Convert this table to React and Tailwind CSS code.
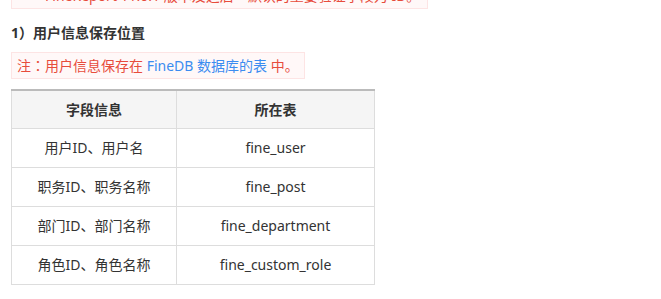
export default function App() {
  const rows = [
    ["用户ID、用户名", "fine_user"],
    ["职务ID、职务名称", "fine_post"],
    ["部门ID、部门名称", "fine_department"],
    ["角色ID、角色名称", "fine_custom_role"],
  ];
  const tc = { fontFamily: '"Noto Sans CJK TC", sans-serif' };
  return (
    <div
      className="w-[661px] h-[299px] overflow-hidden bg-white text-[14px] text-[#333]"
      style={{ fontFamily: '"Microsoft YaHei", "Noto Sans", "Noto Sans CJK SC", sans-serif' }}
    >
      <div className="pl-[11px]">
        <div className="mt-[-23px] w-[417px] border border-[#fde4e4] bg-[#fff8f8] pl-[33px] pt-[5px] pb-0 leading-[24px] text-[#e74c3c]">
          FineReport 11.0.1 版本及之后<span style={tc}>，</span>默认的重要验证字段为 ID。
        </div>
        <div className="mt-[12px] font-bold leading-[22px] text-[#333]">
          1<span style={tc}>）</span>用户信息保存位置
        </div>
        <div className="mt-[8px] inline-block border border-[#fde4e4] bg-[#fff8f8] px-[5px] leading-[24px] text-[#e74c3c]">
          注<span style={tc}>：</span>用户信息保存在 <span className="text-[#3b8cf0]">FineDB 数据库的表</span> 中。
        </div>
        <table className="mt-[10px] w-[364px] border-collapse border-t-2 border-t-[#bbb] text-[#333]">
          <thead>
            <tr className="bg-[#f5f5f5]">
              <th className="h-[38px] w-[165px] border border-[#ddd] border-t-0 p-0 text-center font-bold">字段信息</th>
              <th className="h-[38px] border border-[#ddd] border-t-0 p-0 text-center font-bold">所在表</th>
            </tr>
          </thead>
          <tbody>
            {rows.map(([a, b]) => (
              <tr key={b}>
                <td className="h-[39px] border border-[#ddd] p-0 text-center">{a}</td>
                <td className="h-[39px] border border-[#ddd] p-0 text-center">{b}</td>
              </tr>
            ))}
          </tbody>
        </table>
      </div>
    </div>
  );
}
